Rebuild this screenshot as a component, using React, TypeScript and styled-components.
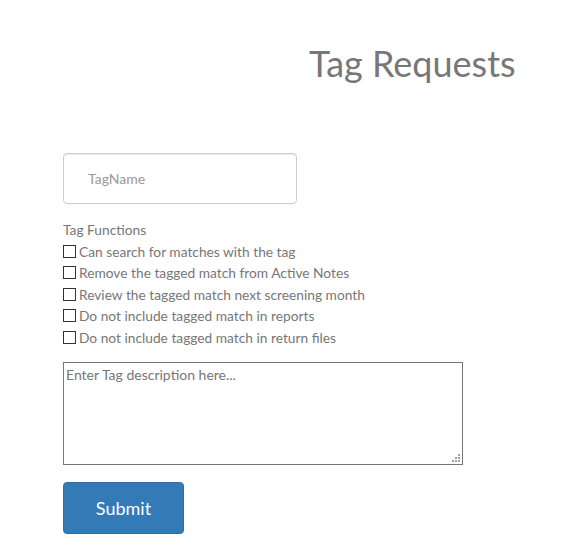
import React from "react";
import styled, { createGlobalStyle } from "styled-components";

const Global = createGlobalStyle`
  html, body { margin: 0; padding: 0; background: #fff; }
  body { font-family: Lato, "Open Sans", sans-serif; color: #777; }
  * { box-sizing: border-box; }
`;

const Page = styled.div`
  display: flex;
  flex-direction: column;
  padding: 0 0 0 63px;
`;

const Title = styled.h1`
  margin: 41px 0 0 246px;
  font-family: Lato, sans-serif;
  font-weight: 400;
  font-size: 36px;
  line-height: 44px;
  color: #777;
`;

const NameInput = styled.input`
  margin-top: 68px;
  width: 234px;
  height: 51px;
  border: 1px solid #ccc;
  border-radius: 4px;
  padding: 0 24px;
  font-family: Lato, sans-serif;
  font-size: 14px;
  color: #555;
  box-shadow: inset 0 1px 1px rgba(0,0,0,0.075);
  outline: none;
  &::placeholder { color: #999; }
`;

const Functions = styled.div`
  margin-top: 15px;
  display: flex;
  flex-direction: column;
  font-size: 13.75px;
  line-height: 21.5px;
  color: #777;
`;

const Label = styled.div``;

const Row = styled.label`
  display: flex;
  align-items: center;
`;

const Box = styled.input`
  appearance: none;
  width: 13px;
  height: 13px;
  margin: 0 3px 0 0;
  border: 1px solid #333;
  background: #fff;
  border-radius: 0;
`;

const DescriptionWrap = styled.div`
  position: relative;
  margin-top: 14px;
  width: 400px;
  height: 103px;
`;

const Description = styled.textarea`
  display: block;
  width: 100%;
  height: 100%;
  border: 1px solid #767676;
  padding: 2px;
  font-family: Lato, sans-serif;
  font-size: 14px;
  line-height: 20px;
  color: #555;
  outline: none;
  resize: none;
  &::placeholder { color: #777; }
`;

const Grip = styled.svg`
  position: absolute;
  right: 3px;
  bottom: 3px;
  width: 8px;
  height: 8px;
  pointer-events: none;
`;

const SubmitButton = styled.button`
  margin-top: 17px;
  width: 121px;
  height: 52px;
  border: 1px solid #2e6da4;
  border-radius: 4px;
  background: #337ab7;
  color: #fff;
  font-family: Lato, sans-serif;
  font-size: 18px;
  cursor: pointer;
`;

const options = [
  "Can search for matches with the tag",
  "Remove the tagged match from Active Notes",
  "Review the tagged match next screening month",
  "Do not include tagged match in reports",
  "Do not include tagged match in return files",
];

export default function App() {
  return (
    <>
      <Global />
      <Page>
        <Title>Tag Requests</Title>
        <NameInput placeholder="TagName" />
        <Functions>
          <Label>Tag Functions</Label>
          {options.map((o) => (
            <Row key={o}>
              <Box type="checkbox" />
              {o}
            </Row>
          ))}
        </Functions>
        <DescriptionWrap>
          <Description placeholder="Enter Tag description here..." />
          <Grip viewBox="0 0 8 8">
            <g fill="#a0a0a0">
              <rect x="6" y="0" width="2" height="2" />
              <rect x="3" y="3" width="2" height="2" />
              <rect x="6" y="3" width="2" height="2" />
              <rect x="0" y="6" width="2" height="2" />
              <rect x="3" y="6" width="2" height="2" />
              <rect x="6" y="6" width="2" height="2" />
            </g>
          </Grip>
        </DescriptionWrap>
        <div>
          <SubmitButton>Submit</SubmitButton>
        </div>
      </Page>
    </>
  );
}
